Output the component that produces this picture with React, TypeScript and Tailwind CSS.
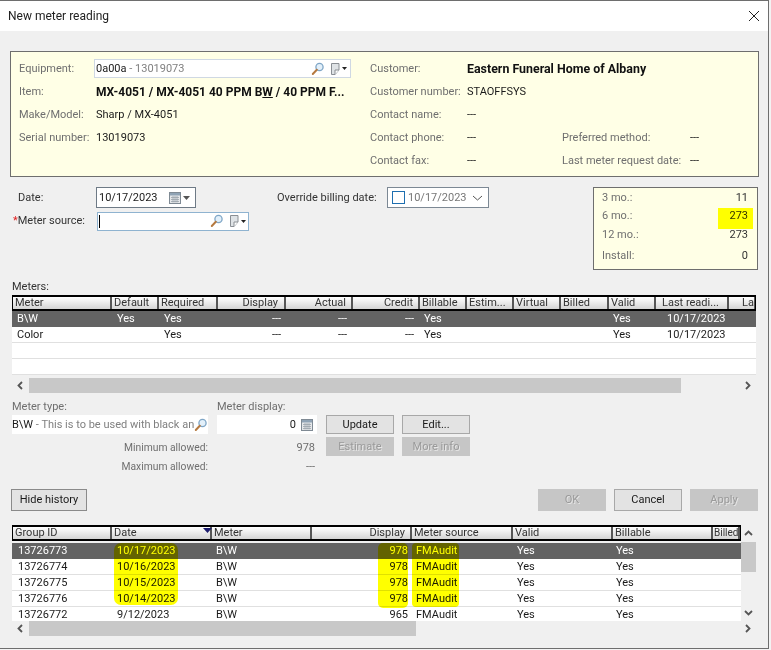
import React from "react";

const Search = () => (
  <svg width="14" height="14" viewBox="0 0 14 14" className="shrink-0">
    <circle cx="8.5" cy="5" r="3.6" fill="#e3f0fa" stroke="#7fa6c6" strokeWidth="1.3" />
    <path d="M5.8 7.8 L1.8 12" stroke="#b5793f" strokeWidth="2" strokeLinecap="round" />
  </svg>
);
const Door = () => (
  <span className="flex items-center gap-px shrink-0">
    <svg width="11" height="14" viewBox="0 0 11 14">
      <path d="M1.5 1.5 H9 V8 L5 12.5 H1.5 Z" fill="#dfe3e6" stroke="#8a8f94" />
      <path d="M5 12.5 V8 H9" fill="#fff" stroke="#8a8f94" />
    </svg>
    <svg width="5" height="3" viewBox="0 0 5 3"><path d="M0 0H5L2.5 3Z" fill="#222" /></svg>
  </span>
);
const Calendar = () => (
  <svg width="12" height="12" viewBox="0 0 12 12" className="shrink-0">
    <rect x="0.5" y="0.5" width="11" height="11" fill="#e5e7e9" stroke="#7f8a94" />
    <rect x="1" y="1" width="10" height="2.5" fill="#8fa3b5" />
    <path d="M2 5.5H10M2 7.5H10M2 9.5H10M4 4V10.5M6 4V10.5M8 4V10.5" stroke="#9aa3ab" strokeWidth="0.8" />
  </svg>
);
const Label = ({ children, className = "" }: { children: React.ReactNode; className?: string }) => (
  <span className={`text-[#6f6f6f] whitespace-nowrap ${className}`}>{children}</span>
);
const Btn = ({ children, disabled, className = "" }: { children: React.ReactNode; disabled?: boolean; className?: string }) => (
  <div
    className={`flex items-center justify-center border ${
      disabled
        ? "bg-[#c6c6c6] border-[#c6c6c6] text-[#9a9a9a] [text-shadow:1px_1px_0_#e6e6e6]"
        : "bg-[#e3e3e3] border-[#a8a8a8] text-[#1a1a1a]"
    } ${className}`}
  >
    {children}
  </div>
);
const Arrow = ({ d }: { d: string }) => (
  <svg width="9" height="9" viewBox="0 0 9 9"><path d={d} fill="none" stroke="#555" strokeWidth="1.8" /></svg>
);

type Col = { t: string; w: string; h?: string; c?: string };
const meterCols: Col[] = [
  { t: "Meter", w: "w-[99px]", h: "pl-[2px]", c: "pl-[5px]" },
  { t: "Default", w: "w-[47px]", h: "pl-[2px]", c: "pl-[6px]" },
  { t: "Required", w: "w-[59px]", h: "pl-[2px]", c: "pl-[6px]" },
  { t: "Display", w: "w-[68px]", h: "justify-end pr-[6px]", c: "justify-end pr-[4px]" },
  { t: "Actual", w: "w-[67px]", h: "justify-end pr-[5px]", c: "justify-end pr-[5px]" },
  { t: "Credit", w: "w-[67px]", h: "justify-end pr-[5px]", c: "justify-end pr-[5px]" },
  { t: "Billable", w: "w-[47px]", h: "pl-[2px]", c: "pl-[5px]" },
  { t: "Estim...", w: "w-[47px]", h: "pl-[2px]", c: "" },
  { t: "Virtual", w: "w-[47px]", h: "pl-[2px]", c: "" },
  { t: "Billed", w: "w-[48px]", h: "pl-[2px]", c: "" },
  { t: "Valid", w: "w-[47px]", h: "pl-[2px]", c: "pl-[5px]" },
  { t: "Last readi...", w: "w-[73px]", h: "pl-[6px]", c: "pl-[12px]" },
  { t: "La", w: "w-[27px]", h: "justify-end", c: "" },
];
const histCols: Col[] = [
  { t: "Group ID", w: "w-[99px]", h: "pl-[2px]", c: "pl-[6px]" },
  { t: "Date", w: "w-[100px]", h: "pl-[2px]", c: "pl-[6px]" },
  { t: "Meter", w: "w-[100px]", h: "pl-[2px]", c: "pl-[5px]" },
  { t: "Display", w: "w-[100px]", h: "justify-end pr-[5px]", c: "justify-end pr-[3px]" },
  { t: "Meter source", w: "w-[101px]", h: "pl-[2px]", c: "pl-[5px]" },
  { t: "Valid", w: "w-[100px]", h: "pl-[2px]", c: "pl-[5px]" },
  { t: "Billable", w: "w-[100px]", h: "pl-[2px]", c: "pl-[4px]" },
  { t: "Billed", w: "w-[27px]", h: "pl-[1px] text-[10px]", c: "" },
];

const Header = ({ cols }: { cols: Col[] }) => (
  <div className="flex h-[16px] border-y-2 border-x border-black bg-gradient-to-b from-[#ffffff] to-[#d4d4d4] overflow-hidden leading-[12px]">
    {cols.map((c, i) => (
      <div key={i} className={`${c.w} shrink-0 flex items-center border-r-2 border-[#555] text-[#333] whitespace-nowrap overflow-hidden ${c.h}`}>
        {c.t}
      </div>
    ))}
  </div>
);
const Row = ({ cols, vals, dark }: { cols: Col[]; vals: string[]; dark?: boolean }) => (
  <div className={`flex h-[16px] shrink-0 border-b pt-px ${dark ? "bg-[#636363] text-white border-[#636363]" : "bg-white text-[#1a1a1a] border-[#e0e0e0]"}`}>
    {cols.map((c, i) => (
      <div key={i} className={`${c.w} shrink-0 flex items-center whitespace-nowrap overflow-hidden ${c.c}`}>
        {vals[i]}
      </div>
    ))}
  </div>
);
const HScroll = ({ thumb, className = "" }: { thumb: string; className?: string }) => (
  <div className={`flex items-center h-[15px] bg-[#f0f0f0] ${className}`}>
    <div className="w-[17px] flex justify-center shrink-0"><Arrow d="M6 1 L2.5 4.5 L6 8" /></div>
    <div className={`h-full bg-[#c8c8c8] ${thumb}`} />
    <div className="flex-1 flex justify-end pr-[4px]"><Arrow d="M3 1 L6.5 4.5 L3 8" /></div>
  </div>
);

const Hl = ({ className }: { className: string }) => (
  <div className={`absolute bg-[#ffff00] mix-blend-multiply ${className}`} />
);

const M = (a: string, def: string, req: string, d: string) => [a, def, req, "---", "---", "---", "Yes", "", "", "", "Yes", d, ""];

export default function App() {
  return (
    <div className="relative w-[771px] h-[650px] overflow-hidden bg-[#f3f3f3] text-[11px] leading-[14px] text-[#1a1a1a] font-['Roboto',sans-serif]">
      <div className="w-[769px] h-[649px] border-t border-r border-b border-[#6e6e6e] bg-[#f0f0f0] flex flex-col">
        {/* Title bar */}
        <div className="h-[30px] bg-white flex items-center justify-between pl-[8px] pr-[8px] shrink-0">
          <span className="text-[12px] text-[#222]">New meter reading</span>
          <svg width="12" height="12" viewBox="0 0 12 12"><path d="M1 1 L11 11 M11 1 L1 11" stroke="#222" strokeWidth="1" /></svg>
        </div>

        {/* Equipment panel */}
        <div className="ml-[10px] mt-[20px] w-[749px] h-[126px] border border-[#6e6e6e] bg-[#ffffe6] pl-[8px] pt-[5px] grid grid-cols-[77px_274px_97px_95px_128px_60px] auto-rows-[23px] items-center shrink-0">
          <Label>Equipment:</Label>
          <div className="w-[257px] h-[19px] -ml-[2px] bg-white border border-[#cfd8e3] flex items-center pl-[1px] pr-[3px] justify-between">
            <span className="text-[#1a1a1a]">0a00a <span className="text-[#808080]">- 13019073</span></span>
            <span className="flex items-center gap-[5px]"><Search /><Door /></span>
          </div>
          <Label>Customer:</Label>
          <b className="col-span-3 whitespace-nowrap text-[#111] text-[12.4px]">Eastern Funeral Home of Albany</b>

          <Label>Item:</Label>
          <b className="whitespace-nowrap text-[#111] text-[12px]">MX-4051 / MX-4051 40 PPM B<u>W</u> / 40 PPM F...</b>
          <Label>Customer number:</Label>
          <span className="col-span-3">STAOFFSYS</span>

          <Label>Make/Model:</Label>
          <span>Sharp / MX-4051</span>
          <Label>Contact name:</Label>
          <span className="col-span-3">---</span>

          <Label>Serial number:</Label>
          <span>13019073</span>
          <Label>Contact phone:</Label>
          <span>---</span>
          <Label>Preferred method:</Label>
          <span>---</span>

          <span />
          <span />
          <Label>Contact fax:</Label>
          <span>---</span>
          <Label>Last meter request date:</Label>
          <span>---</span>
        </div>

        {/* Date section */}
        <div className="flex mt-[10px] shrink-0">
          <div className="w-[593px] shrink-0">
            <div className="flex items-center h-[21px]">
              <span className="ml-[18px] w-[78px] text-[#333]">Date:</span>
              <div className="w-[100px] h-[21px] bg-white border border-[#6e7a86] flex items-center justify-between pl-[2px] pr-[5px]">
                <span>10/17/2023</span>
                <span className="flex items-center gap-[2px]">
                  <Calendar />
                  <svg width="7" height="4" viewBox="0 0 7 4"><path d="M0 0H7L3.5 4Z" fill="#555" /></svg>
                </span>
              </div>
              <span className="ml-[81px] w-[110px] whitespace-nowrap text-[#333]">Override billing date:</span>
              <div className="w-[102px] h-[21px] bg-white border border-[#7c8894] flex items-center pl-[4px] pr-[5px] justify-between">
                <span className="flex items-center gap-[3px] text-[#777]">
                  <span className="w-[13px] h-[13px] border border-[#1e6fb0] inline-block" />
                  10/17/2023
                </span>
                <svg width="11" height="6" viewBox="0 0 11 6"><path d="M1 1 L5.5 5 L10 1" fill="none" stroke="#555" /></svg>
              </div>
            </div>
            <div className="flex items-center h-[20px] mt-[3px]">
              <span className="ml-[13px] w-[84px] text-[#333] whitespace-nowrap"><span className="text-[#e02020]">*</span>Meter source:</span>
              <div className="w-[152px] h-[19px] bg-white border border-[#8fb3d0] flex items-center pl-[1px] pr-[2px] justify-between">
                <span className="w-px h-[13px] bg-black" />
                <span className="flex items-center gap-[5px]"><Search /><Door /></span>
              </div>
            </div>
          </div>
          <div className="relative w-[165px] h-[83px] border border-[#6e6e6e] bg-[#ffffe6] pl-[8px] pr-[4px] text-[#333]">
            <div className="flex justify-between h-[20px] items-center pr-[5px]"><Label>3 mo.:</Label><span>11</span></div>
            <div className="flex justify-between h-[16px] items-center pr-[5px]"><Label>6 mo.:</Label><span>273</span></div>
            <div className="flex justify-between h-[22px] items-center pr-[5px]"><Label>12 mo.:</Label><span>273</span></div>
            <div className="flex justify-between h-[20px] items-center pr-[5px]"><Label>Install:</Label><span>0</span></div>
            <Hl className="left-[124px] top-[20px] w-[35px] h-[21px]" />
          </div>
        </div>

        {/* Meters */}
        <div className="ml-[12px] mt-[10px] h-[14px] flex items-center text-[#333] shrink-0">Meters:</div>
        <div className="ml-[12px] mt-[1px] w-[744px] shrink-0">
          <Header cols={meterCols} />
          <Row cols={meterCols} dark vals={M("B\\W", "Yes", "Yes", "10/17/2023")} />
          <Row cols={meterCols} vals={M("Color", "", "Yes", "10/17/2023")} />
          <Row cols={meterCols} vals={[]} />
          <Row cols={meterCols} vals={[]} />
          <HScroll thumb="w-[652px]" className="mt-[3px]" />
        </div>

        {/* Meter type */}
        <div className="flex ml-[12px] mt-[6px] shrink-0">
          <div className="w-[196px]">
            <div className="h-[16px] flex items-center"><Label>Meter type:</Label></div>
            <div className="h-[19px] bg-white flex items-center justify-between pr-[3px] whitespace-nowrap overflow-hidden">
              <span>B\W <span className="text-[#808080]">- This is to be used with black an</span></span>
              <Search />
            </div>
            <div className="h-[19px] mt-[4px] flex items-center justify-end"><Label className="text-[10.3px]">Minimum allowed:</Label></div>
            <div className="h-[19px] flex items-center justify-end"><Label className="text-[10.3px]">Maximum allowed:</Label></div>
          </div>
          <div className="w-[100px] ml-[9px]">
            <div className="h-[16px] flex items-center"><Label>Meter display:</Label></div>
            <div className="h-[19px] bg-white flex items-center justify-end gap-[5px] pr-[4px]">
              <span>0</span>
              <Calendar />
            </div>
            <div className="h-[19px] mt-[4px] flex items-center justify-end pr-[2px]"><Label>978</Label></div>
            <div className="h-[19px] flex items-center justify-end pr-[2px]"><Label>---</Label></div>
          </div>
          <div className="ml-[9px] mt-[16px] grid grid-cols-[68px_68px] gap-x-[8px] gap-y-[3px] auto-rows-[19px]">
            <Btn>Update</Btn>
            <Btn>Edit...</Btn>
            <Btn disabled>Estimate</Btn>
            <Btn disabled>More info</Btn>
          </div>
        </div>

        {/* Buttons */}
        <div className="flex justify-between ml-[11px] w-[747px] mt-[13px] h-[22px] shrink-0">
          <Btn className="w-[76px] !border-[#8a8a8a]">Hide history</Btn>
          <div className="flex gap-[8px]">
            <Btn disabled className="w-[68px]">OK</Btn>
            <Btn className="w-[68px]">Cancel</Btn>
            <Btn disabled className="w-[68px]">Apply</Btn>
          </div>
        </div>

        {/* History */}
        <div className="relative ml-[12px] mt-[14px] w-[744px] shrink-0">
          <div className="flex h-[96px]">
            <div className="w-[729px] shrink-0 overflow-hidden">
              <Header cols={histCols} />
              <div className="h-[2px]" />
              <Row cols={histCols} dark vals={["13726773", "10/17/2023", "B\\W", "978", "FMAudit", "Yes", "Yes", ""]} />
              <Row cols={histCols} vals={["13726774", "10/16/2023", "B\\W", "978", "FMAudit", "Yes", "Yes", ""]} />
              <Row cols={histCols} vals={["13726775", "10/15/2023", "B\\W", "978", "FMAudit", "Yes", "Yes", ""]} />
              <Row cols={histCols} vals={["13726776", "10/14/2023", "B\\W", "978", "FMAudit", "Yes", "Yes", ""]} />
              <Row cols={histCols} vals={["13726772", "9/12/2023", "B\\W", "965", "FMAudit", "Yes", "Yes", ""]} />
            </div>
            <div className="w-[15px] bg-[#f0f0f0] flex flex-col items-center">
              <div className="h-[17px] flex items-center"><Arrow d="M1 6 L4.5 2.5 L8 6" /></div>
              <div className="w-full h-[30px] bg-[#c8c8c8]" />
              <div className="flex-1 flex items-end pb-[4px]"><Arrow d="M1 3 L4.5 6.5 L8 3" /></div>
            </div>
          </div>
          <HScroll thumb="w-[387px]" />
          <Hl className="left-[102px] top-[18px] w-[64px] h-[62px] rounded-[7px]" />
          <Hl className="left-[366px] top-[18px] w-[30px] h-[65px] rounded-[5px]" />
          <Hl className="left-[400px] top-[18px] w-[47px] h-[64px] rounded-[4px]" />
          <svg width="9" height="5" viewBox="0 0 9 5" className="absolute left-[191px] top-[3px]"><path d="M0 0H9L4.5 5Z" fill="#1c1c6e" /></svg>
        </div>
      </div>
    </div>
  );
}
